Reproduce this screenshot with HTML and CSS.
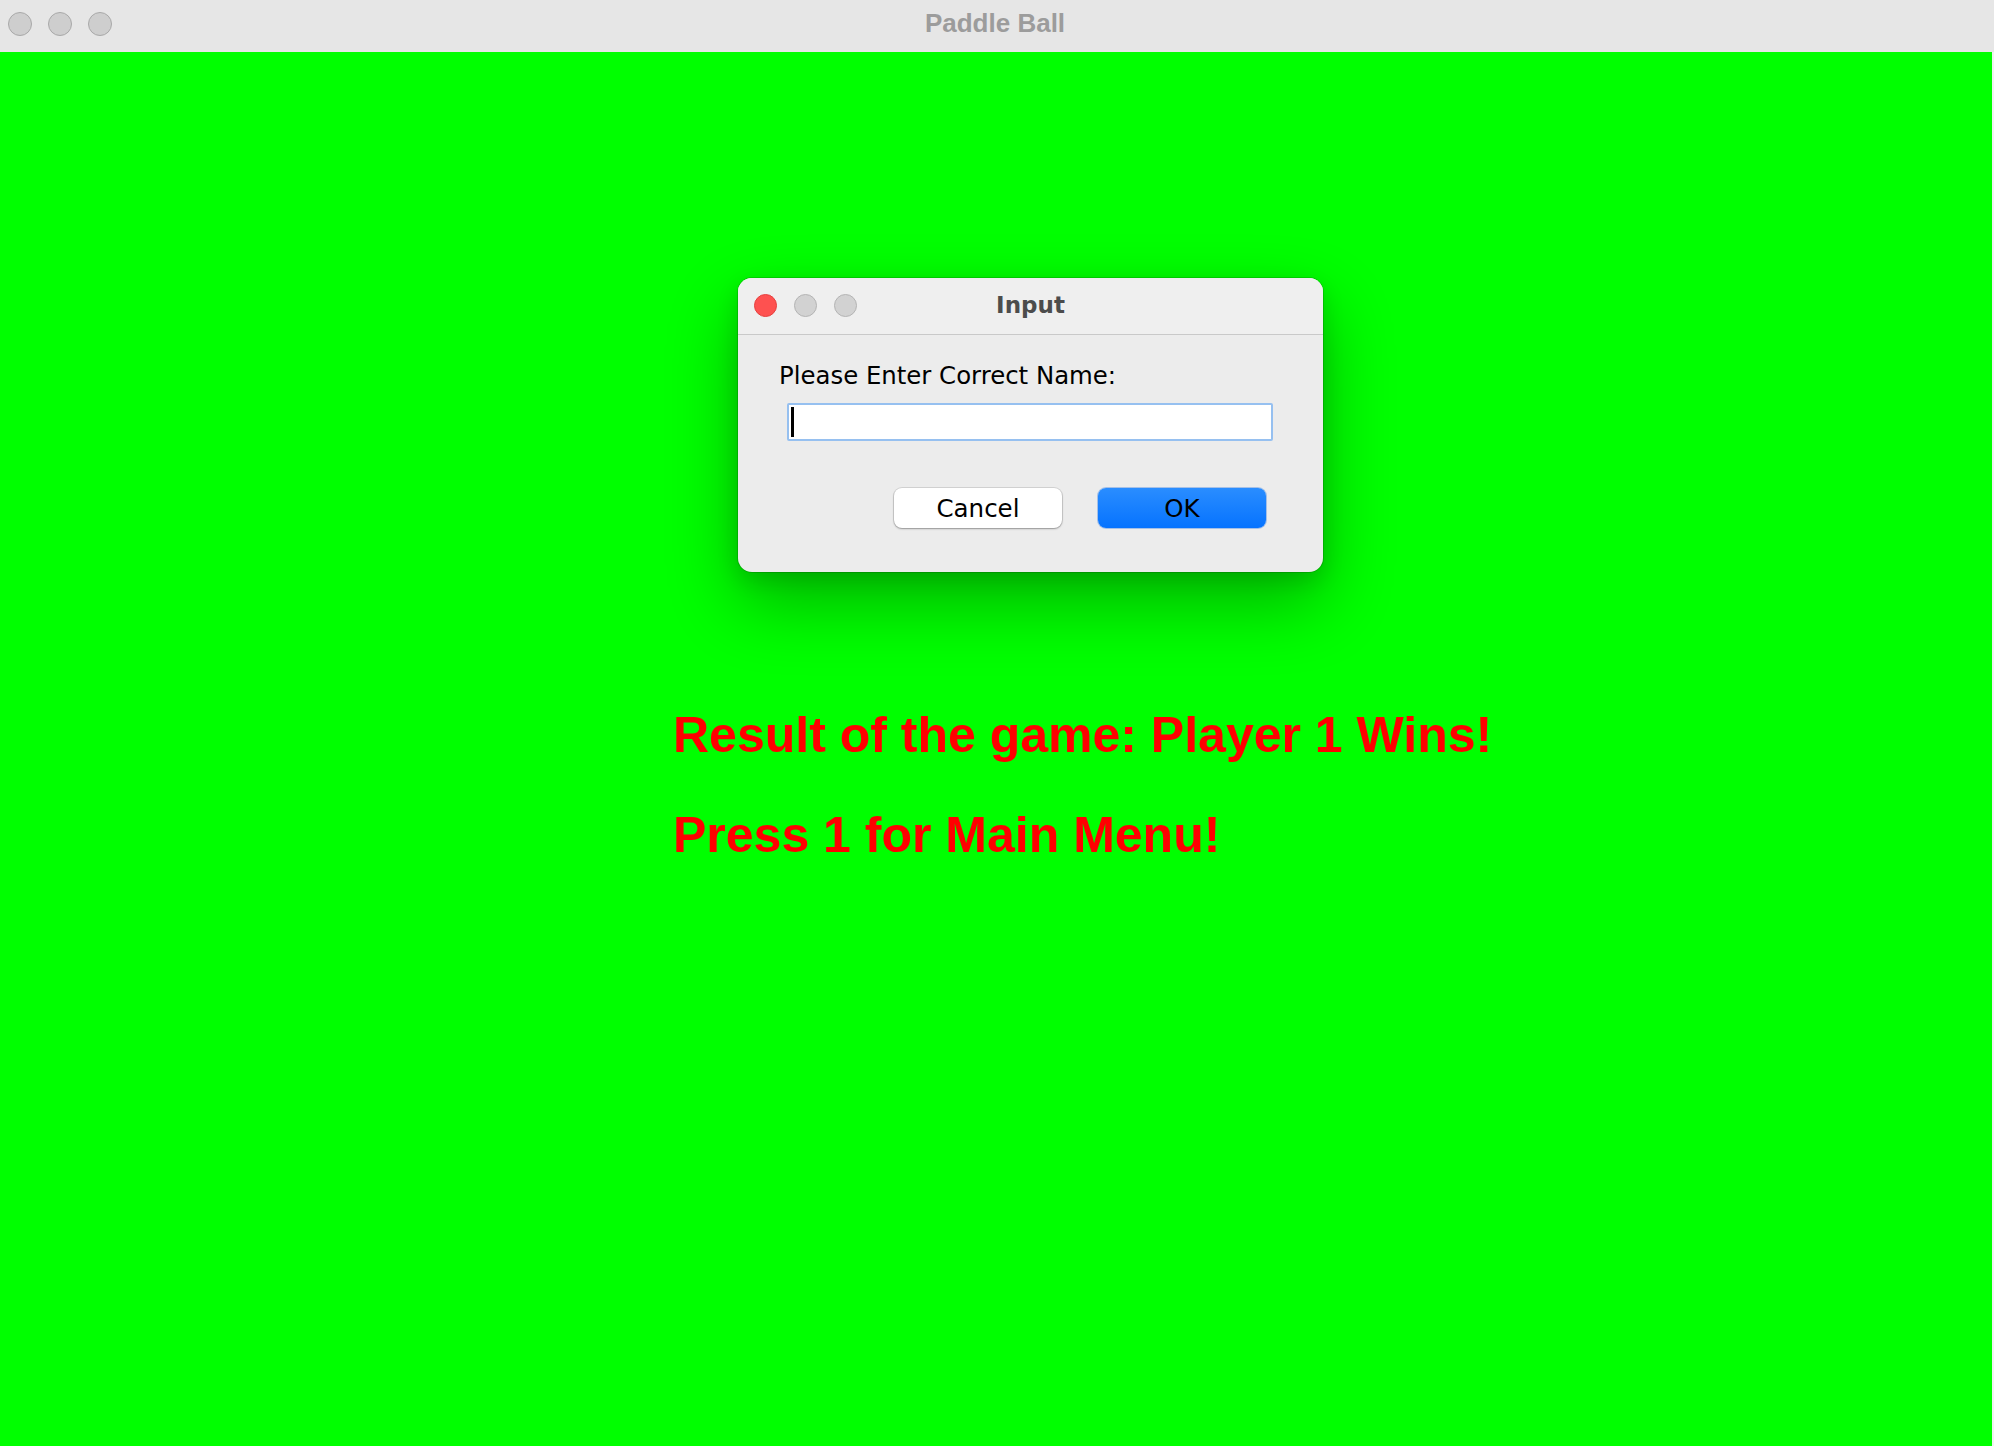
FILE: index.html
```html
<!DOCTYPE html>
<html lang="en">
<head>
<meta charset="utf-8">
<title>Paddle Ball</title>
<link rel="stylesheet" href="styles.css">
</head>
<body>
<div class="window">
  <header class="titlebar">
    <div class="lights">
      <span class="light"></span>
      <span class="light"></span>
      <span class="light"></span>
    </div>
    <div class="title">Paddle Ball</div>
    <div class="spacer"></div>
  </header>
  <main class="canvas">
    <p class="msg">Result of the game: Player 1 Wins!</p>
    <p class="msg second">Press 1 for Main Menu!</p>

    <section class="dialog">
      <div class="dlg-bar">
        <div class="dlg-lights">
          <span class="dlight close"></span>
          <span class="dlight"></span>
          <span class="dlight"></span>
        </div>
        <div class="dlg-title">Input</div>
      </div>
      <div class="dlg-body">
        <label class="dlg-label">Please Enter Correct Name:</label>
        <div class="field"><span class="caret"></span></div>
        <div class="buttons">
          <button class="btn">Cancel</button>
          <button class="btn primary">OK</button>
        </div>
      </div>
    </section>
  </main>
</div>
</body>
</html>
```
FILE: styles.css
```css
* { box-sizing: border-box; }

html, body {
  margin: 0;
  padding: 0;
  width: 1994px;
  height: 1446px;
  overflow: hidden;
  background: #f2f2f2;
}

.window {
  display: flex;
  flex-direction: column;
  width: 1994px;
  height: 1446px;
}

.titlebar {
  height: 52px;
  flex: 0 0 52px;
  background: #e6e6e6;
  display: grid;
  grid-template-columns: 1fr auto 1fr;
  align-items: start;
}

.lights {
  display: flex;
  gap: 16px;
  padding: 12px 0 0 8px;
}

.light {
  width: 24px;
  height: 24px;
  border-radius: 50%;
  background: #cecece;
  border: 1px solid #a9a9a9;
}

.title {
  font-family: "Liberation Sans", Arial, sans-serif;
  font-weight: bold;
  font-size: 26px;
  line-height: 30px;
  padding-top: 8px;
  color: #9c9c9c;
  transform: translateX(-2px);
}

.canvas {
  position: relative;
  flex: 1 1 auto;
  width: 1992px;
  background: #00ff00;
  padding: 658px 0 0 673px;
}

.msg {
  margin: 0;
  font-family: "Liberation Sans", Arial, sans-serif;
  font-weight: bold;
  font-size: 50px;
  line-height: 50px;
  color: #ff0000;
}

.msg.second {
  margin-top: 50px;
}

.dialog {
  position: absolute;
  left: 738px;
  top: 226px;
  width: 585px;
  height: 294px;
  background: #ececec;
  border-radius: 14px;
  box-shadow: 0 0 0 1px rgba(0, 0, 0, 0.14), 0 30px 70px rgba(0, 0, 0, 0.3), 0 8px 22px rgba(0, 0, 0, 0.12);
  font-family: "DejaVu Sans", "Lucida Grande", sans-serif;
  overflow: hidden;
}

.dlg-bar {
  position: relative;
  height: 57px;
  background: #efefef;
  border-bottom: 1px solid #c9c9c9;
  display: flex;
  align-items: center;
  justify-content: center;
}

.dlg-lights {
  position: absolute;
  left: 16px;
  top: 16px;
  display: flex;
  gap: 17px;
}

.dlight {
  width: 23px;
  height: 23px;
  border-radius: 50%;
  background: #d2d2d2;
  border: 1px solid #b4b4b4;
}

.dlight.close {
  background: #fe5150;
  border-color: #e5403e;
}

.dlg-title {
  font-weight: bold;
  font-size: 23px;
  color: #4c4c4c;
  padding-bottom: 2px;
}

.dlg-body {
  display: flex;
  flex-direction: column;
  padding: 27px 50px 0 41px;
}

.dlg-label {
  font-size: 24.4px;
  line-height: 28px;
  color: #000;
}

.field {
  margin: 13px 0 0 8px;
  height: 38px;
  background: #fff;
  border: 2px solid #96c0f0;
  border-radius: 2px;
  display: flex;
  align-items: center;
  padding-left: 2px;
}

.caret {
  width: 3px;
  height: 30px;
  background: #000;
}

.buttons {
  display: flex;
  justify-content: flex-end;
  gap: 36px;
  margin-top: 47px;
  padding-right: 7px;
}

.btn {
  width: 168px;
  height: 40px;
  border-radius: 8px;
  border: none;
  font-family: "DejaVu Sans", "Lucida Grande", sans-serif;
  font-size: 24.5px;
  color: #000;
  background: #ffffff;
  box-shadow: 0 0 0 1px rgba(0, 0, 0, 0.1), 0 1px 2px rgba(0, 0, 0, 0.3);
  padding: 0;
}

.btn.primary {
  background: linear-gradient(#2a8dff, #0673ff);
  box-shadow: 0 0 0 1px rgba(0, 90, 220, 0.3);
}
```
